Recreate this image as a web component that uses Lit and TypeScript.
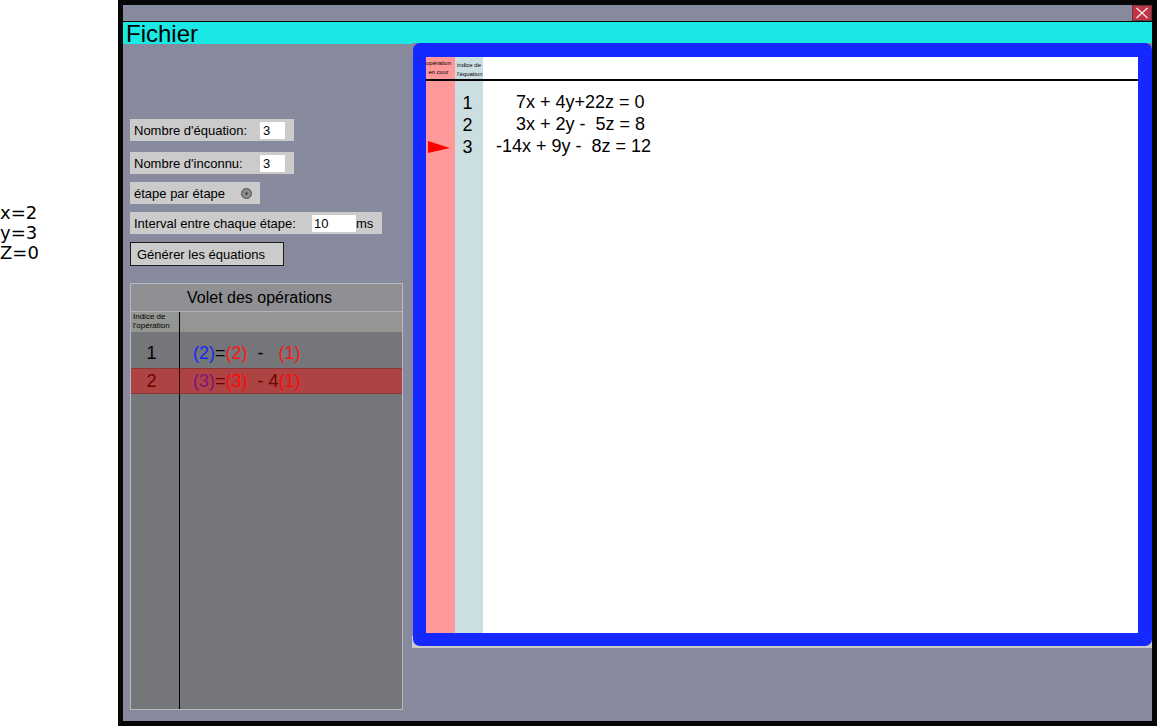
import { LitElement, html, css } from "lit";
import { customElement, property } from "lit/decorators.js";

interface Operation {
  target: string;
  source: string;
  factor: string;
  pivot: string;
}

@customElement("operations-panel")
class OperationsPanel extends LitElement {
  @property({ attribute: false }) operations: Operation[] = [];
  @property({ type: Number }) current = 0;

  static styles = css`
    :host {
      display: flex;
      flex-direction: column;
      box-sizing: border-box;
      border: 1px solid #b9b9bf;
      background: #757679;
    }
    .title {
      margin: 0;
      padding-right: 14px;
      font-size: 16px;
      font-weight: 400;
      line-height: 26px;
      padding-top: 1px;
      text-align: center;
      background: #908f94;
      border-bottom: 1px solid #b4b4b8;
    }
    .list {
      flex: 1;
      width: 100%;
      border-collapse: separate;
      border-spacing: 0;
      table-layout: fixed;
    }
    .list th,
    .list td {
      padding: 0;
      font-weight: 400;
      text-align: left;
    }
    .index {
      width: 48px;
      border-right: 1px solid #000;
    }
    .head th {
      height: 20px;
      background: #949693;
      font-size: 8px;
      line-height: 9px;
      vertical-align: top;
    }
    .head .index {
      padding: 0 0 0 2px;
      width: 46px;
    }
    .row td {
      height: 26px;
      font-size: 18px;
      line-height: 26px;
      white-space: pre;
    }
    .row .index {
      padding-right: 7px;
      text-align: center;
    }
    .row .formula {
      padding-left: 13px;
    }
    .row:first-child td {
      padding-top: 8px;
      padding-bottom: 2px;
    }
    .target {
      color: #1428ff;
    }
    .source {
      color: #ff1414;
    }
    .row.active td {
      height: 24px;
      line-height: 24px;
      color: #700000;
      background: #ae4343;
      border-top: 1px solid #8b3535;
      border-bottom: 1px solid #8b3535;
    }
    .row.active .index {
      border-right-color: #300000;
    }
    .active .target {
      color: #7a1580;
    }
    .active .source {
      color: #ff0a0a;
    }
  `;

  render() {
    return html`
      <h2 class="title">Volet des opérations</h2>
      <table class="list">
        <thead>
          <tr class="head">
            <th class="index" scope="col">Indice de<br />l'opération</th>
            <th></th>
          </tr>
        </thead>
        <tbody>
          ${this.operations.map(
            (op, i) => html`<tr class="row ${i + 1 === this.current ? "active" : ""}">
              <td class="index">${i + 1}</td>
              <td class="formula"><span class="target">(${op.target})</span>=<span class="source">(${op.source})</span>${op.factor}<span class="source">(${op.pivot})</span></td>
            </tr>`
          )}
          <tr>
            <td class="index"></td>
            <td></td>
          </tr>
        </tbody>
      </table>
    `;
  }
}

@customElement("equation-board")
class EquationBoard extends LitElement {
  @property({ attribute: false }) equations: string[] = [];
  @property({ type: Number }) current = 0;

  static styles = css`
    :host {
      display: flex;
      box-sizing: border-box;
      padding: 0 0 2px 1px;
      background: linear-gradient(#878a9d 98%, #cbcbcb 98%);
    }
    .board {
      flex: 1;
      display: flex;
      border: 13px solid #1428ff;
      border-top-width: 14px;
      border-right-width: 14px;
      border-radius: 7px;
      background: #fff;
    }
    .grid {
      flex: 1;
      border-collapse: separate;
      border-spacing: 0;
      table-layout: fixed;
      width: 100%;
    }
    .grid th,
    .grid td {
      padding: 0;
      font-weight: 400;
      text-align: left;
      white-space: pre;
    }
    .marker {
      width: 29px;
      background: #ff9999;
    }
    .index {
      width: 28px;
      background: #cbdfe2;
    }
    .head th {
      height: 22px;
      border-bottom: 2px solid #000;
      font-size: 6px;
      line-height: 9px;
      vertical-align: top;
    }
    .head .marker {
      padding: 2px 4px 0 0;
      height: 20px;
      text-align: center;
      width: 25px;
    }
    .head .index {
      padding: 4px 0 0 2px;
      height: 18px;
      width: 26px;
    }
    .row td {
      height: 22px;
      font-size: 18px;
      line-height: 22px;
    }
    .row .marker svg {
      display: block;
      margin: 2px 0 0 2px;
    }
    .row .index {
      padding-top: 2px;
      height: 20px;
      line-height: 20px;
      padding-right: 3px;
      text-align: center;
    }
    .row .equation {
      padding-left: 13px;
    }
    .row:first-child td {
      padding-top: 10px;
    }
    .row:first-child .index {
      padding-top: 12px;
    }
  `;

  render() {
    return html`
      <div class="board">
        <table class="grid">
          <thead>
            <tr class="head">
              <th class="marker" scope="col">opération<br />en cour</th>
              <th class="index" scope="col">indice de<br />l'équation</th>
              <th></th>
            </tr>
          </thead>
          <tbody>
            ${this.equations.map(
              (eq, i) => html`<tr class="row">
                <td class="marker">${i + 1 === this.current
                  ? html`<svg width="22" height="12" viewBox="0 0 22 12" aria-hidden="true"><path d="M0 0L22 7L0 12Z" fill="#f00" /></svg>`
                  : ""}</td>
                <td class="index">${i + 1}</td>
                <td class="equation">${eq}</td>
              </tr>`
            )}
            <tr>
              <td class="marker"></td>
              <td class="index"></td>
              <td></td>
            </tr>
          </tbody>
        </table>
      </div>
    `;
  }
}

@customElement("app-root")
class AppRoot extends LitElement {
  private operations: Operation[] = [
    { target: "2", source: "2", factor: "  -   ", pivot: "1" },
    { target: "3", source: "3", factor: "  - 4", pivot: "1" },
  ];

  private equations = [
    "    7x + 4y+22z = 0",
    "    3x + 2y -  5z = 8",
    "-14x + 9y -  8z = 12",
  ];

  static styles = css`
    :host {
      display: grid;
      grid-template-columns: 118px 1fr;
      min-height: 100vh;
      background: #fff;
      color: #000;
      font-family: "Liberation Sans", Arial, sans-serif;
    }
    .solution {
      margin: 0;
      padding: 203px 0 0;
      list-style: none;
      font-family: "DejaVu Sans", sans-serif;
      font-size: 18px;
      line-height: 20px;
    }
    .window {
      display: flex;
      flex-direction: column;
      border: 5px solid #060606;
      background: #878a9d;
    }
    .titlebar {
      display: flex;
      justify-content: flex-end;
      height: 16px;
      border-bottom: 1px solid #000;
    }
    .close {
      display: grid;
      place-items: center;
      width: 20px;
      padding: 0;
      border: 1px solid #6b3540;
      background: #bf3545;
    }
    .menu {
      display: flex;
      height: 22px;
      background: #1ae8e4;
    }
    .menu-item {
      padding: 0 3px;
      border: 0;
      background: none;
      color: inherit;
      font: inherit;
      font-size: 24px;
      line-height: 24px;
    }
    .content {
      flex: 1;
      display: grid;
      grid-template-columns: 280px 1fr;
      column-gap: 9px;
    }
    .side {
      display: flex;
      flex-direction: column;
      align-items: flex-start;
      gap: 8px;
      padding: 75px 0 11px 7px;
      font-size: 13px;
    }
    .counts {
      display: grid;
      gap: 11px;
    }
    .field {
      display: flex;
      align-items: center;
      box-sizing: border-box;
      height: 22px;
      padding: 0 4px;
      background: #cbcbcb;
    }
    .count {
      width: 164px;
      padding-right: 9px;
      justify-content: space-between;
    }
    .step {
      width: 130px;
      padding-right: 8px;
      justify-content: space-between;
    }
    .delay {
      width: 252px;
    }
    .delay-label {
      flex: 1;
    }
    .unit {
      width: 22px;
    }
    .box {
      box-sizing: border-box;
      width: 25px;
      height: 17px;
      padding: 0 3px;
      border: 0;
      background: #fff;
      color: inherit;
      font: inherit;
    }
    .box.wide {
      width: 44px;
      padding: 0 2px;
    }
    .radio {
      appearance: none;
      width: 11px;
      height: 11px;
      margin: 0;
      border: 1px solid #4c4c4c;
      border-radius: 50%;
      background: radial-gradient(circle, #333 0, #8c8c8c 2px);
    }
    .generate {
      box-sizing: border-box;
      width: 154px;
      height: 24px;
      padding: 0 6px;
      border: 1px solid #1c1c1c;
      background: #cbcbcb;
      color: inherit;
      font: inherit;
      text-align: left;
    }
    .panel {
      flex: 1;
      align-self: stretch;
      margin-top: 9px;
    }
    .stage {
      margin: -1px 0 73px;
    }
  `;

  render() {
    return html`
      <ul class="solution">
        <li>x=2</li>
        <li>y=3</li>
        <li>Z=0</li>
      </ul>
      <main class="window">
        <header class="titlebar">
          <button class="close" aria-label="Fermer">
            <svg width="14" height="12" viewBox="0 0 14 12" aria-hidden="true">
              <path d="M1.5 1L12.5 11M12.5 1L1.5 11" stroke="#f3e4e6" stroke-width="1.4" fill="none" />
            </svg>
          </button>
        </header>
        <nav class="menu"><button class="menu-item">Fichier</button></nav>
        <div class="content">
          <div class="side">
            <div class="counts">
              <div class="field count">
                <label for="equations">Nombre d'équation:</label>
                <input class="box" id="equations" type="text" inputmode="numeric" .value=${"3"} />
              </div>
              <div class="field count">
                <label for="unknowns">Nombre d'inconnu:</label>
                <input class="box" id="unknowns" type="text" inputmode="numeric" .value=${"3"} />
              </div>
            </div>
            <div class="field step">
              <label for="step">étape par étape</label>
              <input class="radio" id="step" type="radio" checked />
            </div>
            <div class="field delay">
              <label class="delay-label" for="delay">Interval entre chaque étape:</label>
              <input class="box wide" id="delay" type="text" inputmode="numeric" .value=${"10"} />
              <span class="unit">ms</span>
            </div>
            <button class="generate">Générer les équations</button>
            <operations-panel class="panel" .operations=${this.operations} .current=${2}></operations-panel>
          </div>
          <equation-board class="stage" .equations=${this.equations} .current=${3}></equation-board>
        </div>
      </main>
    `;
  }
}
